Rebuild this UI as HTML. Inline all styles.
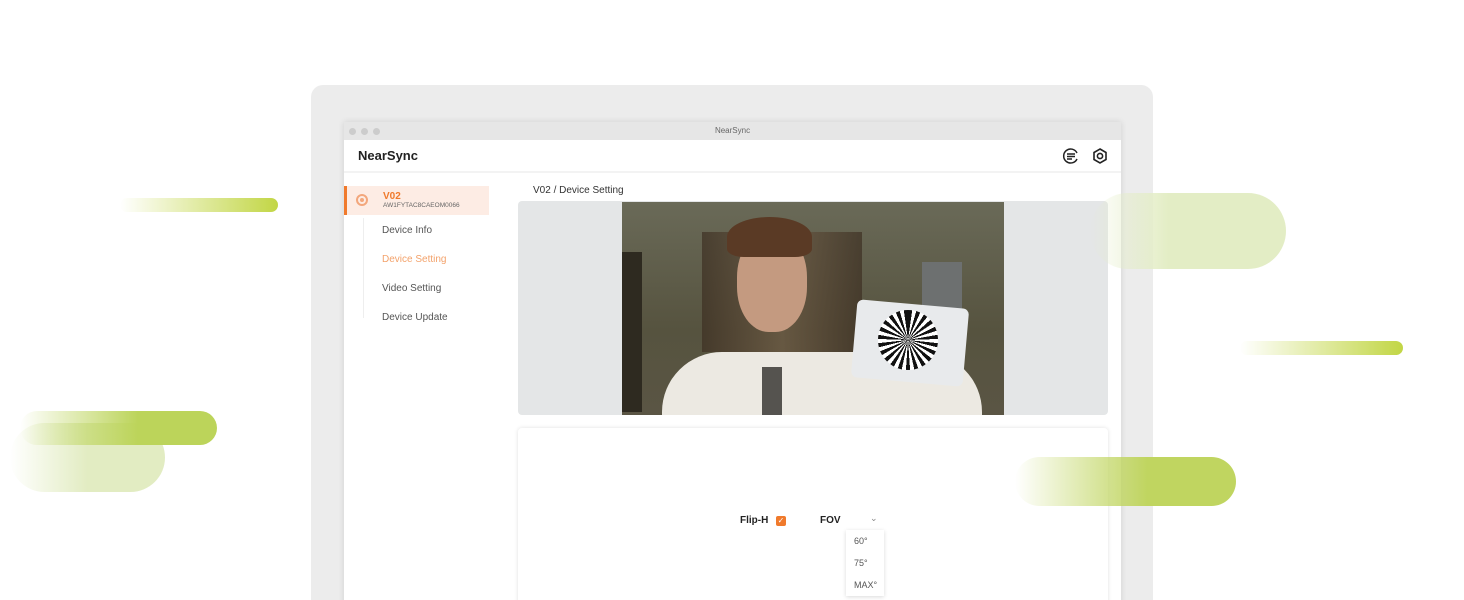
<!DOCTYPE html>
<html style="height:600px;overflow:hidden"><head><style>
body{margin:0;width:1464px;height:600px;background:#fff;position:relative;overflow:hidden;font-family:"Liberation Sans",sans-serif}
.a{position:absolute}
.g{border-radius:999px}
</style></head><body>
<div class="a" style="left:311px;top:85px;width:842px;height:530px;background:#ececec;border-radius:12px"></div>
<div class="a" style="left:344px;top:122px;width:777px;height:490px;background:#fff;box-shadow:0 0 6px rgba(0,0,0,.12)"></div>
<div class="a" style="left:344px;top:122px;width:777px;height:18px;background:#e6e6e6;font-size:8px;color:#666;text-align:center;line-height:18px">NearSync</div>
<div class="a" style="left:349px;top:128px;width:7px;height:7px;border-radius:50%;background:#ccc"></div>
<div class="a" style="left:361px;top:128px;width:7px;height:7px;border-radius:50%;background:#ccc"></div>
<div class="a" style="left:373px;top:128px;width:7px;height:7px;border-radius:50%;background:#ccc"></div>
<div class="a" style="left:344px;top:171px;width:777px;height:2px;background:#f3f3f3"></div>
<div class="a" style="left:358px;top:148px;font-size:13px;font-weight:bold;color:#222">NearSync</div>
<svg class="a" style="left:1062px;top:147px" width="18" height="18" viewBox="0 0 18 18" fill="none" stroke="#222" stroke-width="1.5"><path d="M15 6A7 7 0 1 0 15 12"/><path d="M5 7h8M5 9.5h8M5 12h5"/></svg>
<svg class="a" style="left:1091px;top:147px" width="18" height="18" viewBox="0 0 18 18" fill="none" stroke="#222" stroke-width="1.6"><path d="M9 2l6 3.5v7L9 16l-6-3.5v-7z"/><circle cx="9" cy="9" r="2.6"/></svg>

<div class="a" style="left:344px;top:186px;width:145px;height:29px;background:#fdece4"></div>
<div class="a" style="left:344px;top:186px;width:3px;height:29px;background:#f07a2c"></div>
<div class="a" style="left:356px;top:194px;width:12px;height:12px;border-radius:50%;border:2px solid #f3a77c;box-sizing:border-box"></div>
<div class="a" style="left:360px;top:198px;width:4px;height:4px;border-radius:50%;background:#f3a77c"></div>
<div class="a" style="left:383px;top:191px;font-size:10px;font-weight:bold;color:#f07a2c">V02</div>
<div class="a" style="left:383px;top:202px;font-size:6.5px;color:#666">AW1FYTAC8CAEOM0066</div>
<div class="a" style="left:363px;top:218px;width:1px;height:100px;background:#eee"></div>
<div class="a" style="left:382px;top:225px;font-size:10px;color:#555">Device Info</div>
<div class="a" style="left:382px;top:254px;font-size:10px;color:#f3a26b">Device Setting</div>
<div class="a" style="left:382px;top:283px;font-size:10px;color:#555">Video Setting</div>
<div class="a" style="left:382px;top:312px;font-size:10px;color:#555">Device Update</div>

<div class="a" style="left:533px;top:185px;font-size:10px;color:#333">V02 / Device Setting</div>
<div class="a" style="left:518px;top:201px;width:590px;height:214px;background:#e4e6e7;border-radius:4px"></div>
<div class="a" style="left:622px;top:202px;width:382px;height:213px;background:linear-gradient(180deg,#6a6a58,#56533f 60%,#5a5544);overflow:hidden">
 <div class="a" style="left:80px;top:30px;width:160px;height:120px;background:linear-gradient(90deg,#3d2f22,#6d5a43,#3d2f22);opacity:.7"></div>
 <div class="a" style="left:0;top:50px;width:20px;height:160px;background:#2e2a20"></div>
 <div class="a" style="left:300px;top:60px;width:40px;height:60px;background:#6d7070"></div>
 <div class="a" style="left:40px;top:150px;width:320px;height:100px;background:#ece9e2;border-radius:60px 60px 0 0"></div>
 <div class="a" style="left:115px;top:30px;width:70px;height:100px;background:#c49a80;border-radius:45%"></div>
 <div class="a" style="left:105px;top:15px;width:85px;height:40px;background:#5a3a25;border-radius:50% 50% 20% 20%"></div>
 <div class="a" style="left:140px;top:165px;width:20px;height:50px;background:#55534f"></div>
 <div class="a" style="left:232px;top:102px;width:112px;height:78px;background:#e8eaec;border-radius:6px;transform:rotate(5deg)"></div>
 <div class="a" style="left:256px;top:108px;width:60px;height:60px;border-radius:50%;background:repeating-conic-gradient(#111 0 8deg,#fff 8deg 16deg)"></div>
</div>
<div class="a" style="left:518px;top:428px;width:590px;height:190px;background:#fff;border-radius:4px;box-shadow:0 0 4px rgba(0,0,0,.12)"></div>
<div class="a" style="left:740px;top:515px;font-size:10px;font-weight:bold;color:#222">Flip-H</div>
<div class="a" style="left:776px;top:516px;width:10px;height:10px;border-radius:2px;background:#f07a2c;color:#fff;font-size:8px;line-height:10px;text-align:center">✓</div>
<div class="a" style="left:820px;top:515px;font-size:10px;font-weight:bold;color:#222">FOV</div>
<div class="a" style="left:870px;top:513px;font-size:9px;color:#888">⌄</div>
<div class="a" style="left:846px;top:530px;width:38px;height:66px;background:#fff;box-shadow:0 1px 4px rgba(0,0,0,.15);font-size:9px;color:#555">
 <div class="a" style="left:8px;top:6px">60°</div><div class="a" style="left:8px;top:28px">75°</div><div class="a" style="left:8px;top:50px">MAX°</div></div>

<div class="a g" style="left:120px;top:198px;width:158px;height:14px;background:linear-gradient(90deg,rgba(197,216,74,0),#c2d645)"></div>
<div class="a g" style="left:1090px;top:193px;width:196px;height:76px;background:linear-gradient(90deg,rgba(225,235,190,0),#e3edc5 40%)"></div>
<div class="a g" style="left:1240px;top:341px;width:163px;height:14px;background:linear-gradient(90deg,rgba(197,216,74,0),#c2d645)"></div>
<div class="a g" style="left:10px;top:423px;width:155px;height:69px;background:linear-gradient(90deg,rgba(225,235,190,0),#e2ecc2 50%)"></div>
<div class="a g" style="left:20px;top:411px;width:197px;height:34px;background:linear-gradient(90deg,rgba(190,212,80,0),#bcd45a 60%)"></div>
<div class="a g" style="left:1015px;top:457px;width:221px;height:49px;background:linear-gradient(90deg,rgba(190,212,80,0),#c0d560 60%)"></div>
</body></html>
